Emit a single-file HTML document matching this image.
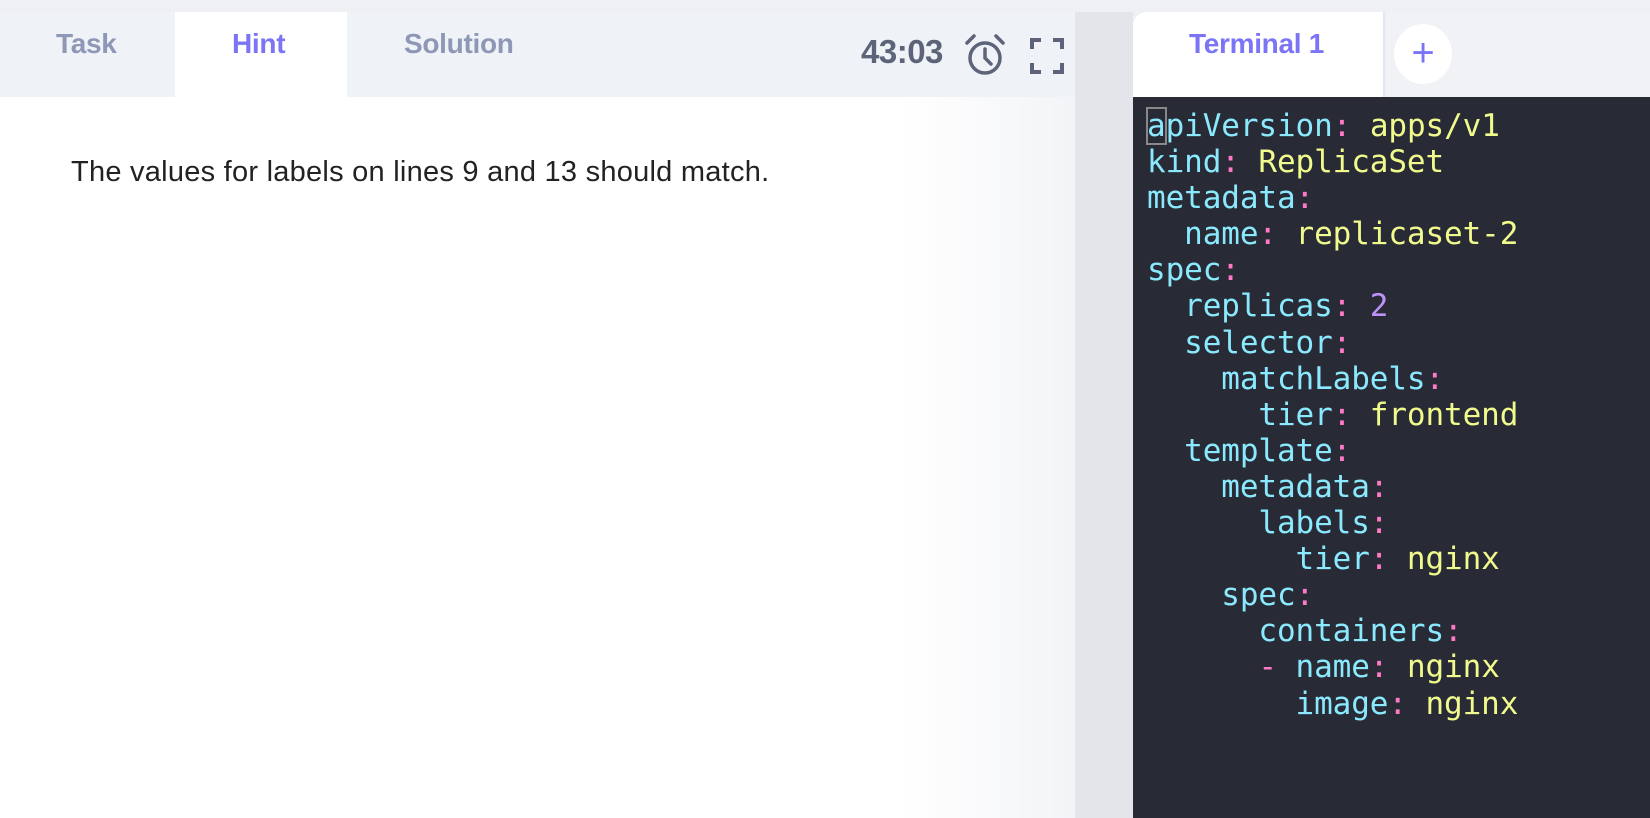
<!DOCTYPE html>
<html><head><style>
*{margin:0;padding:0;box-sizing:border-box}
body{width:1650px;height:818px;background:#eef0f4;position:relative;overflow:hidden;font-family:"Liberation Sans",sans-serif}
.left{position:absolute;left:0;top:12px;width:1075px;height:806px;background:#fff}
.tabs{position:absolute;left:0;top:0;width:1075px;height:85px;background:#eff3f8}
.tab{position:absolute;top:16px;font-weight:bold;font-size:28px;color:#8e97b5;letter-spacing:-0.3px}
.hint{position:absolute;left:175px;top:0;width:172px;height:85px;background:#fff}
.content{position:absolute;left:0;top:85px;width:1075px;height:721px;background:linear-gradient(90deg,#fff 0,#fff 900px,#f3f4f7 1075px)}
.gap{position:absolute;left:1075px;top:12px;width:58px;height:806px;background:#e3e5ea}
.term{position:absolute;left:1133px;top:97px;width:517px;height:721px;background:#282a36}
.ttab{position:absolute;left:1133px;top:12px;width:252px;height:85px;background:#fff;border-radius:14px 0 0 0;border-right:2px solid #e3e6f2}
.tright{position:absolute;left:1387px;top:12px;width:263px;height:85px;background:#f0f2f6}
.plus{position:absolute;left:1394px;top:24px;width:58px;height:60px;border-radius:50%;background:#fff;color:#7b75f5;font-size:40px;text-align:center;line-height:58px}
pre{position:absolute;left:1147px;top:108px;font-family:"DejaVu Sans Mono",monospace;font-size:31px;line-height:36.1px;color:#8be9fd;letter-spacing:-0.1px}
.y{color:#f1fa8c}.p{color:#ff79c6}.v{color:#bd93f9}
.cur{outline:2px solid #888;outline-offset:-1px}
</style></head><body>
<div class="left">
<div class="tabs">
<div class="hint"></div>
<div class="tab" style="left:56px">Task</div>
<div class="tab" style="left:232px;color:#7b75f5">Hint</div>
<div class="tab" style="left:404px">Solution</div>
<div style="position:absolute;left:861px;top:21px;font-size:33px;font-weight:bold;color:#5d6378;letter-spacing:-0.5px">43:03</div>
<svg style="position:absolute;left:962px;top:20px" width="46" height="46" viewBox="0 0 46 46" fill="none" stroke="#5d6378" stroke-width="3.5" stroke-linecap="round"><circle cx="23" cy="26" r="15"/><path d="M23 17v9l6 6M5 11l7-7M41 11l-7-7"/></svg>
<svg style="position:absolute;left:1030px;top:26px" width="34" height="36" viewBox="0 0 34 36" fill="none" stroke="#5d6378" stroke-width="4"><path d="M2 11V2h9M23 2h9v9M32 25v9h-9M11 34H2v-9"/></svg>
</div>
<div class="content"><div style="position:absolute;left:71px;top:59px;font-size:29px;color:#222;letter-spacing:0.25px;font-weight:300">The values for labels on lines 9 and 13 should match.</div></div>
</div>
<div class="gap"></div>
<div class="ttab"><div style="position:absolute;left:56px;top:16px;font-size:28px;font-weight:bold;color:#7b75f5;letter-spacing:-0.3px">Terminal 1</div></div>
<div class="tright"></div>
<div class="plus">+</div>
<div class="term"></div>
<pre><span class="cur">a</span>piVersion<span class="p">:</span> <span class="y">apps/v1</span>
kind<span class="p">:</span> <span class="y">ReplicaSet</span>
metadata<span class="p">:</span>
  name<span class="p">:</span> <span class="y">replicaset-2</span>
spec<span class="p">:</span>
  replicas<span class="p">:</span> <span class="v">2</span>
  selector<span class="p">:</span>
    matchLabels<span class="p">:</span>
      tier<span class="p">:</span> <span class="y">frontend</span>
  template<span class="p">:</span>
    metadata<span class="p">:</span>
      labels<span class="p">:</span>
        tier<span class="p">:</span> <span class="y">nginx</span>
    spec<span class="p">:</span>
      containers<span class="p">:</span>
      <span class="p">-</span> name<span class="p">:</span> <span class="y">nginx</span>
        image<span class="p">:</span> <span class="y">nginx</span></pre>
</body></html>
